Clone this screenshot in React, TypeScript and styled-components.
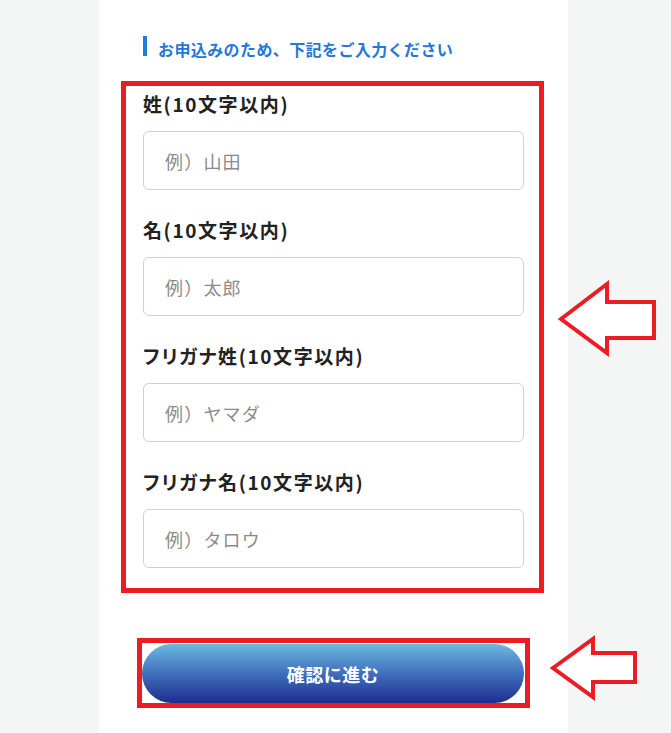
import React from 'react';
import styled, { createGlobalStyle } from 'styled-components';

const GlobalStyle = createGlobalStyle`
  html, body {
    margin: 0;
    padding: 0;
    background: #f4f6f6;
  }
  body {
    font-family: "Noto Sans CJK JP", "Noto Sans", sans-serif;
  }
`;

const Page = styled.div`
  padding-left: 99px;
  min-height: 733px;
`;

const Card = styled.div`
  width: 469px;
  min-height: 733px;
  background: #ffffff;
  box-sizing: border-box;
  padding: 36px 0 0 22px;
`;

const Heading = styled.h2`
  display: flex;
  align-items: center;
  gap: 11px;
  margin: 0 0 25px 22px;
  height: 20px;
  font-size: 16px;
  font-weight: 700;
  color: #2478d8;
  line-height: 20px;
  letter-spacing: 0.4px;

  span {
    position: relative;
    top: 3px;
  }

  &::before {
    content: '';
    display: block;
    width: 4px;
    height: 20px;
    background: #1a7fe0;
  }
`;

const Highlight = styled.div<{ $pad: string }>`
  position: relative;
  border: 5px solid #ec1c24;
  padding: ${p => p.$pad};
  box-sizing: border-box;
`;

const FormBox = styled(Highlight)`
  width: 423px;
`;

const ButtonBox = styled(Highlight)`
  width: 393px;
  margin: 45px 0 0 16px;
`;

const Field = styled.div`
  display: flex;
  flex-direction: column;
  gap: 14px;
  & + & {
    margin-top: 26px;
  }
`;

const Label = styled.label`
  font-size: 19px;
  font-weight: 700;
  line-height: 27px;
  letter-spacing: 1.6px;
  font-feature-settings: "palt";
  color: #222222;
`;

const Input = styled.input`
  width: 381px;
  height: 59px;
  box-sizing: border-box;
  border: 1px solid #cdd1d9;
  border-radius: 6px;
  padding: 0 0 0 21px;
  font-family: inherit;
  font-size: 18px;
  letter-spacing: 1.2px;
  color: #333;
  outline: none;

  &::placeholder {
    color: #8a8a8a;
  }
`;

const SubmitButton = styled.button`
  display: block;
  width: 382px;
  height: 59px;
  border: none;
  border-radius: 30px;
  background: linear-gradient(180deg, #6cb9e0 0%, #3f6fbc 50%, #1f2d8e 100%);
  color: #ffffff;
  font-family: inherit;
  font-size: 18px;
  font-weight: 700;
  letter-spacing: 0.5px;
  cursor: pointer;
`;

const Arrow = styled.svg`
  position: absolute;
  overflow: visible;
`;

const BigArrow = styled(Arrow)`
  left: calc(100% + 16px);
  top: 192px;
`;

const SmallArrow = styled(Arrow)`
  left: calc(100% + 23px);
  top: -10px;
`;

const fields = [
  { label: '姓(10文字以内)', placeholder: '例）山田' },
  { label: '名(10文字以内)', placeholder: '例）太郎' },
  { label: 'フリガナ姓(10文字以内)', placeholder: '例）ヤマダ' },
  { label: 'フリガナ名(10文字以内)', placeholder: '例）タロウ' },
];

const App: React.FC = () => {
  return (
    <Page>
      <GlobalStyle />
      <Card>
        <Heading>
          <span>お申込みのため、下記をご入力ください</span>
        </Heading>
        <FormBox $pad="4px 15px 20px 17px">
          {fields.map(f => (
            <Field key={f.label}>
              <Label>{f.label}</Label>
              <Input placeholder={f.placeholder} />
            </Field>
          ))}
          <BigArrow width="100" height="75" viewBox="0 0 100 75">
            <polygon
              points="6,41 52,6 52,24 99,24 99,60 52,60 52,75"
              fill="#ffffff"
              stroke="#ec1c24"
              strokeWidth="4"
            />
          </BigArrow>
        </FormBox>
        <ButtonBox $pad="1px 0 0 0">
          <SubmitButton>確認に進む</SubmitButton>
          <SmallArrow width="85" height="62" viewBox="0 0 85 62">
            <polygon
              points="5,35 45,6 45,20 87,20 87,49 45,49 45,64"
              fill="#ffffff"
              stroke="#ec1c24"
              strokeWidth="4"
            />
          </SmallArrow>
        </ButtonBox>
      </Card>
    </Page>
  );
};

export default App;
